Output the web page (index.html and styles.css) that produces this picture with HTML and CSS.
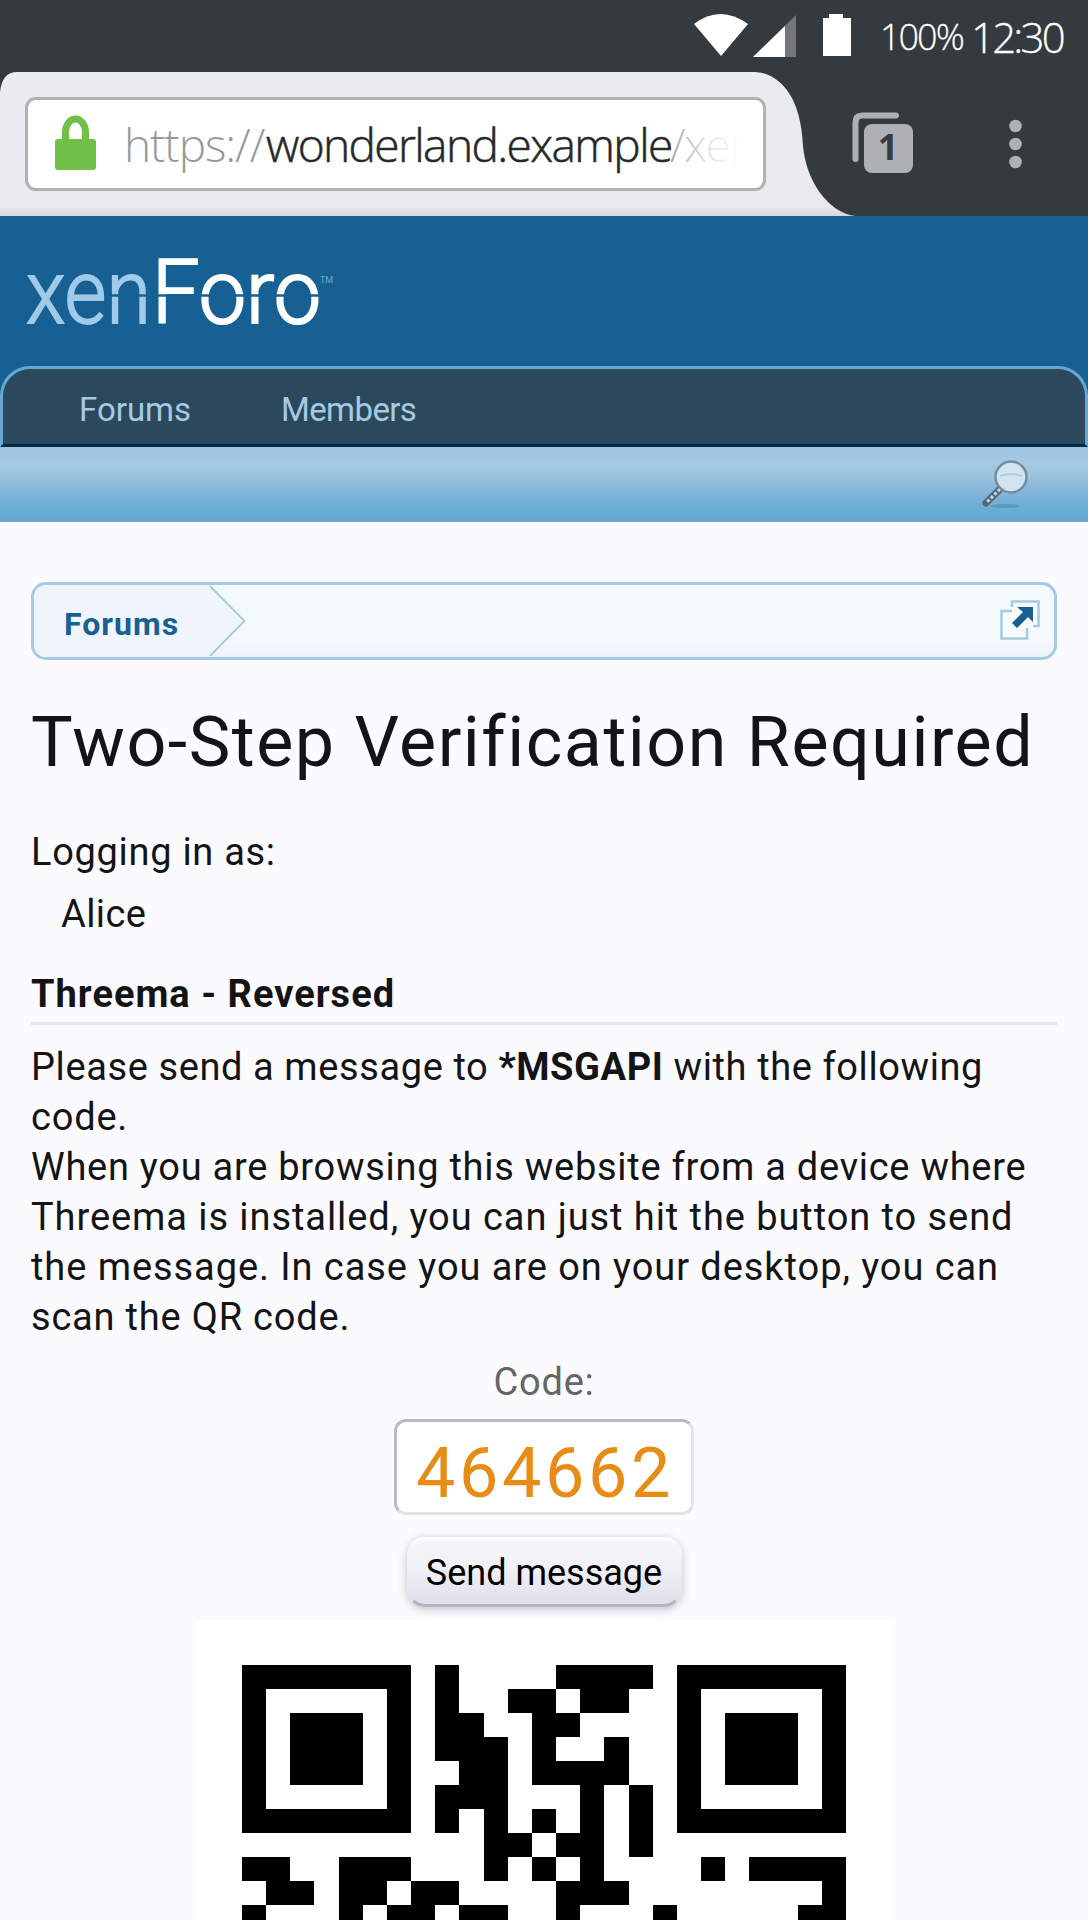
FILE: index.html
```html
<!DOCTYPE html>
<html lang="en">
<head>
<meta charset="utf-8">
<title>Two-Step Verification Required</title>
<link rel="stylesheet" href="styles.css">
</head>
<body>
<div class="status">
  <svg class="status-icons" width="154" height="72" viewBox="693 0 154 72">
    <path d="M694 24Q720 4 748 24L721 56Z" fill="#fff"/>
    <path d="M796 15V57H753Z" fill="#75787b"/>
    <path d="M785 26V57H753Z" fill="#fff"/>
    <path d="M829 14h14v4h8v38h-28V18h6z" fill="#fff"/>
  </svg>
  <span class="battery">100%</span>
  <span class="clock">12:30</span>
</div>
<div class="browser">
  <svg class="tab" width="860" height="144" viewBox="0 72 860 144">
    <defs><linearGradient id="tabfill" x1="0" y1="0" x2="0" y2="1"><stop offset="0" stop-color="#e9ebee"/><stop offset=".93" stop-color="#eaeaed"/><stop offset="1" stop-color="#d9d7da"/></linearGradient></defs>
    <path d="M0 92Q2 72 17 72H753C777 72 801 93 803 146C806 180 827 212 855 216H0Z" fill="url(#tabfill)"/>
  </svg>
  <div class="address">
    <svg class="lock" width="41" height="56" viewBox="0 0 41 56"><path d="M10.500 28V17a10 13 0 0 1 20 0v11" fill="none" stroke="#6fbf49" stroke-width="7"/><rect y="24" width="41" height="31" rx="3" fill="#6fbf49"/></svg>
    <span class="url"><span class="scheme">https://</span><span class="host">wonderland.example</span><span class="path">/xen</span></span>
  </div>
  <svg class="tools" width="220" height="144" viewBox="840 72 220 144">
    <path d="M896 115.500H862q-6.500 0-6.500 7V159" fill="none" stroke="#adb1b4" stroke-width="6" stroke-linecap="round"/>
    <rect x="864" y="124" width="49" height="49" rx="8" fill="#adb1b4"/>
    <text x="888" y="160" class="count">1</text>
    <g fill="#adb1b4"><circle cx="1015.500" cy="126" r="6.300"/><circle cx="1015.500" cy="144" r="6.300"/><circle cx="1015.500" cy="162" r="6.300"/></g>
  </svg>
</div>
<header class="site">
  <svg class="logo" width="320" height="80" viewBox="20 250 320 80">
    <text x="26" y="323" textLength="125" lengthAdjust="spacingAndGlyphs" class="xen">xen</text>
    <text x="152" y="323" textLength="169" lengthAdjust="spacingAndGlyphs" class="foro">Foro</text>
    <path d="M108 295.500H322" stroke="#176093" stroke-width="2.500"/>
    <text x="320" y="283" class="tm">TM</text>
  </svg>
</header>
<nav class="nav"><a class="nav-forums">Forums</a><a class="nav-members">Members</a></nav>
<div class="searchbar">
  <svg width="48" height="52" viewBox="0 0 48 52">
    <ellipse cx="23" cy="46" rx="15" ry="2" fill="#508cb0" opacity=".6"/>
    <path d="M18 29L4 43" stroke="#52697a" stroke-width="7" stroke-linecap="round"/>
    <path d="M18 29L4 43" stroke="#cbd8df" stroke-width="3" stroke-dasharray="3 2"/>
    <circle cx="29" cy="17" r="15.500" fill="#d3e3f0" stroke="#738ea1" stroke-width="2.500"/>
    <path d="M18 16q11-4 22 0" stroke="#a8c5da" stroke-width="1.500" fill="none"/>
  </svg>
</div>
<main>
  <div class="crumbs">
    <svg class="crumb-arrow" width="216" height="72" viewBox="0 0 216 72"><path d="M0 0H176L211 36L176 72H0Z" fill="#eff5fb"/><path d="M176 1L210.500 36L176 71" fill="none" stroke="#a5cae4" stroke-width="1.800"/></svg>
    <a>Forums</a>
    <svg class="popout" width="40" height="40" viewBox="0 0 40 40">
      <path d="M12 11H1.500V38.500H27V28" fill="#f9fcfe" stroke="#a5cae4" stroke-width="2.500"/>
      <path d="M12 7V1.500H38.500V26H33" fill="#f9fcfe" stroke="#a5cae4" stroke-width="2.500"/>
      <path d="M17 7H33V22L28 17L17 28L12 23L23 12Z" fill="#176093"/>
    </svg>
  </div>
  <h1>Two-Step Verification Required</h1>
  <p class="login">Logging in as:</p>
  <p class="user">Alice</p>
  <h2>Threema - Reversed</h2>
  <p class="copy"><span class="l1">Please send a message to <b>*MSGAPI</b> with the following</span><br>code.<br><span class="l3">When you are browsing this website from a device where</span><br><span class="l4">Threema is installed, you can just hit the button to send</span><br><span class="l4">the message. In case you are on your desktop, you can</span><br>scan the QR code.</p>
  <p class="label">Code:</p>
  <div class="code">464662</div>
  <button class="send">Send message</button>
  <div class="qr">
    <svg width="604" height="258" viewBox="0 0 25 10.750" preserveAspectRatio="none" shape-rendering="crispEdges">
      <path d="M0 0h7v7H0zM1 1v5h5V1zM2 2h3v3H2zM18 0h7v7h-7zM19 1v5h5V1zM20 2h3v3h-3z" fill-rule="evenodd"/>
      <path d="M8 0h1v1h-1zM13 0h4v1h-4z M8 1h1v1h-1zM11 1h2v1h-2zM14 1h2v1h-2z M8 2h2v1h-2zM12 2h2v1h-2z M8 3h3v1h-3zM12 3h1v1h-1zM15 3h1v1h-1z M9 4h2v1h-2zM12 4h4v1h-4z M8 5h3v1h-3zM14 5h1v1h-1zM16 5h1v1h-1z M8 6h1v1h-1zM10 6h1v1h-1zM12 6h1v1h-1zM14 6h1v1h-1zM16 6h1v1h-1z M10 7h2v1h-2zM13 7h2v1h-2zM16 7h1v1h-1z M0 8h2v1h-2zM4 8h3v1h-3zM10 8h1v1h-1zM12 8h1v1h-1zM14 8h1v1h-1zM19 8h1v1h-1zM21 8h4v1h-4z M1 9h2v1h-2zM4 9h2v1h-2zM7 9h2v1h-2zM13 9h3v1h-3zM24 9h1v1h-1z M0 10h1v1h-1zM4 10h1v1h-1zM6 10h2v1h-2zM9 10h2v1h-2zM13 10h1v1h-1zM17 10h1v1h-1zM23 10h2v1h-2z"/>
    </svg>
  </div>
</main>
</body>
</html>
```
FILE: styles.css
```css
* { box-sizing: border-box; }
html, body { height: 1920px; overflow: hidden; }
body { margin: 0; background: #fbfbfd; color: #141417; font-family: Roboto, "Noto Sans", sans-serif; }
p, h1, h2 { margin: 0; white-space: nowrap; }
svg { display: block; flex: none; }

.status { height: 72px; background: #353a3e; display: flex; color: #fff; padding-left: 693px; font-family: "Open Sans", sans-serif; font-weight: 300; white-space: nowrap; }
.status-icons { width: 154px; overflow: visible; }
.battery { width: 91px; margin-left: 33px; font-size: 36px; line-height: 73px; letter-spacing: -2px; -webkit-text-stroke: .3px #fff; }
.clock { font-size: 42px; line-height: 73px; letter-spacing: -2.8px; -webkit-text-stroke: .3px #fff; }

.browser { height: 144px; background: #353a3e; display: flex; position: relative; }
.tab { position: absolute; left: 0; top: 0; }
.address { position: relative; width: 741px; height: 94px; margin: 25px 74px 0 25px; border: 3px solid #b1b1b3; border-radius: 11px; background: #fff; display: flex; padding: 15px 15px 0 27px; overflow: hidden; }
.url { margin-left: 28px; margin-top: -16px; white-space: nowrap; font-family: "Open Sans", sans-serif; font-weight: 300; font-size: 46px; line-height: 90px; display: flex; }
.scheme { width: 142px; color: #999; letter-spacing: -1.1px; }
.host { width: 404px; color: #242527; letter-spacing: -1.6px; -webkit-text-stroke: .6px #343537; }
.path { letter-spacing: -1.5px; color: transparent; background: linear-gradient(90deg, #aaa, #e2e2e5 35px, #fff 72px); -webkit-background-clip: text; background-clip: text; }
.count { font: 700 36px "Open Sans", sans-serif; fill: #353a3e; text-anchor: middle; }

.site { height: 150px; background: #176093; padding: 34px 0 0 20px; }
.logo { overflow: visible; }
.xen, .foro { font-family: Roboto, sans-serif; font-size: 89px; fill: #9fcbe9; font-weight: 300; stroke: #9fcbe9; stroke-width: 1.8px; }
.foro { fill: #fff; stroke: #fff; stroke-width: 2.2px; }
.tm { font-size: 9px; fill: #70a7cd; }
.nav { height: 81px; border: 3px solid #65a8d5; border-bottom-color: #032b47; border-radius: 30px 30px 0 0; background: #2b485c; box-shadow: 0 -30px 0 #176093; display: flex; color: #a5cae4; font-size: 33px; line-height: 81px; }
.nav-forums { width: 202px; margin-left: 76px; letter-spacing: 0; }
.nav-members { letter-spacing: -.6px; }
.searchbar { height: 75px; background: linear-gradient(#9ec5e0, #a4cae5 20%, #9bc4df 38%, #76aed7 72%, #69afd4 80%, #68a6cd); display: flex; justify-content: flex-end; padding: 13px 58px 0 0; }

main { padding: 60px 31px 0 31px; display: flex; flex-direction: column; align-items: flex-start; }
.crumbs { width: 1026px; height: 78px; border: 3px solid #a5cae4; border-radius: 15px; background: linear-gradient(#f4f9fc 70%, #eef4fb); position: relative; display: flex; justify-content: space-between; padding: 0 14px 0 30px; overflow: hidden; }
.crumbs a { position: relative; font-size: 32px; line-height: 78px; font-weight: 700; color: #176093; letter-spacing: 1px; }
.crumb-arrow { position: absolute; left: 0; top: 0; }
.popout { margin-top: 15px; }
h1 { font-size: 70px; font-weight: 400; line-height: 80px; margin-top: 42px; letter-spacing: 1.5px; }
.login, .user, .copy, .label { font-size: 38px; line-height: 50px; letter-spacing: .8px; }
.login { margin-top: 45px; letter-spacing: .7px; }
.user { margin: 12px 0 0 30px; letter-spacing: .4px; }
h2 { width: 1026px; font-size: 38px; line-height: 50px; height: 86px; padding-top: 30px; border-bottom: 3px solid #dbe9f0; font-weight: 700; letter-spacing: 1px; margin-bottom: 17px; }
.l1 { letter-spacing: .6px; }
.l3 { letter-spacing: .73px; }
.l4 { letter-spacing: .93px; }
.label { align-self: center; margin-top: 15px; color: #656568; }
.code { align-self: center; width: 300px; height: 96px; margin-top: 12px; border: 3px solid #bcbcbe; border-right-color: #e4e4e7; border-bottom-color: #e4e4e7; border-radius: 12px; background: #fff; color: #e78d17; font-size: 70px; line-height: 102px; text-align: center; letter-spacing: 3.7px; padding-left: 2px; }
.send { align-self: center; width: 275px; height: 70px; margin: 22px 0 0; padding: 0; border: 3px solid transparent; border-top-color: #fff; border-bottom-color: #b6b5bb; border-radius: 18px; background: linear-gradient(#f6f6fa, #f1f0f5 45%, #dfdde9) border-box; box-shadow: 0 2px 8px rgba(65, 55, 100, .3); font: 400 36px/66px Roboto, sans-serif; color: #000; white-space: nowrap; }
.qr { align-self: flex-start; width: 699px; height: 300px; margin: 13px 0 0 165px; padding: 45px 0 0 46px; background: #fff; }
```
